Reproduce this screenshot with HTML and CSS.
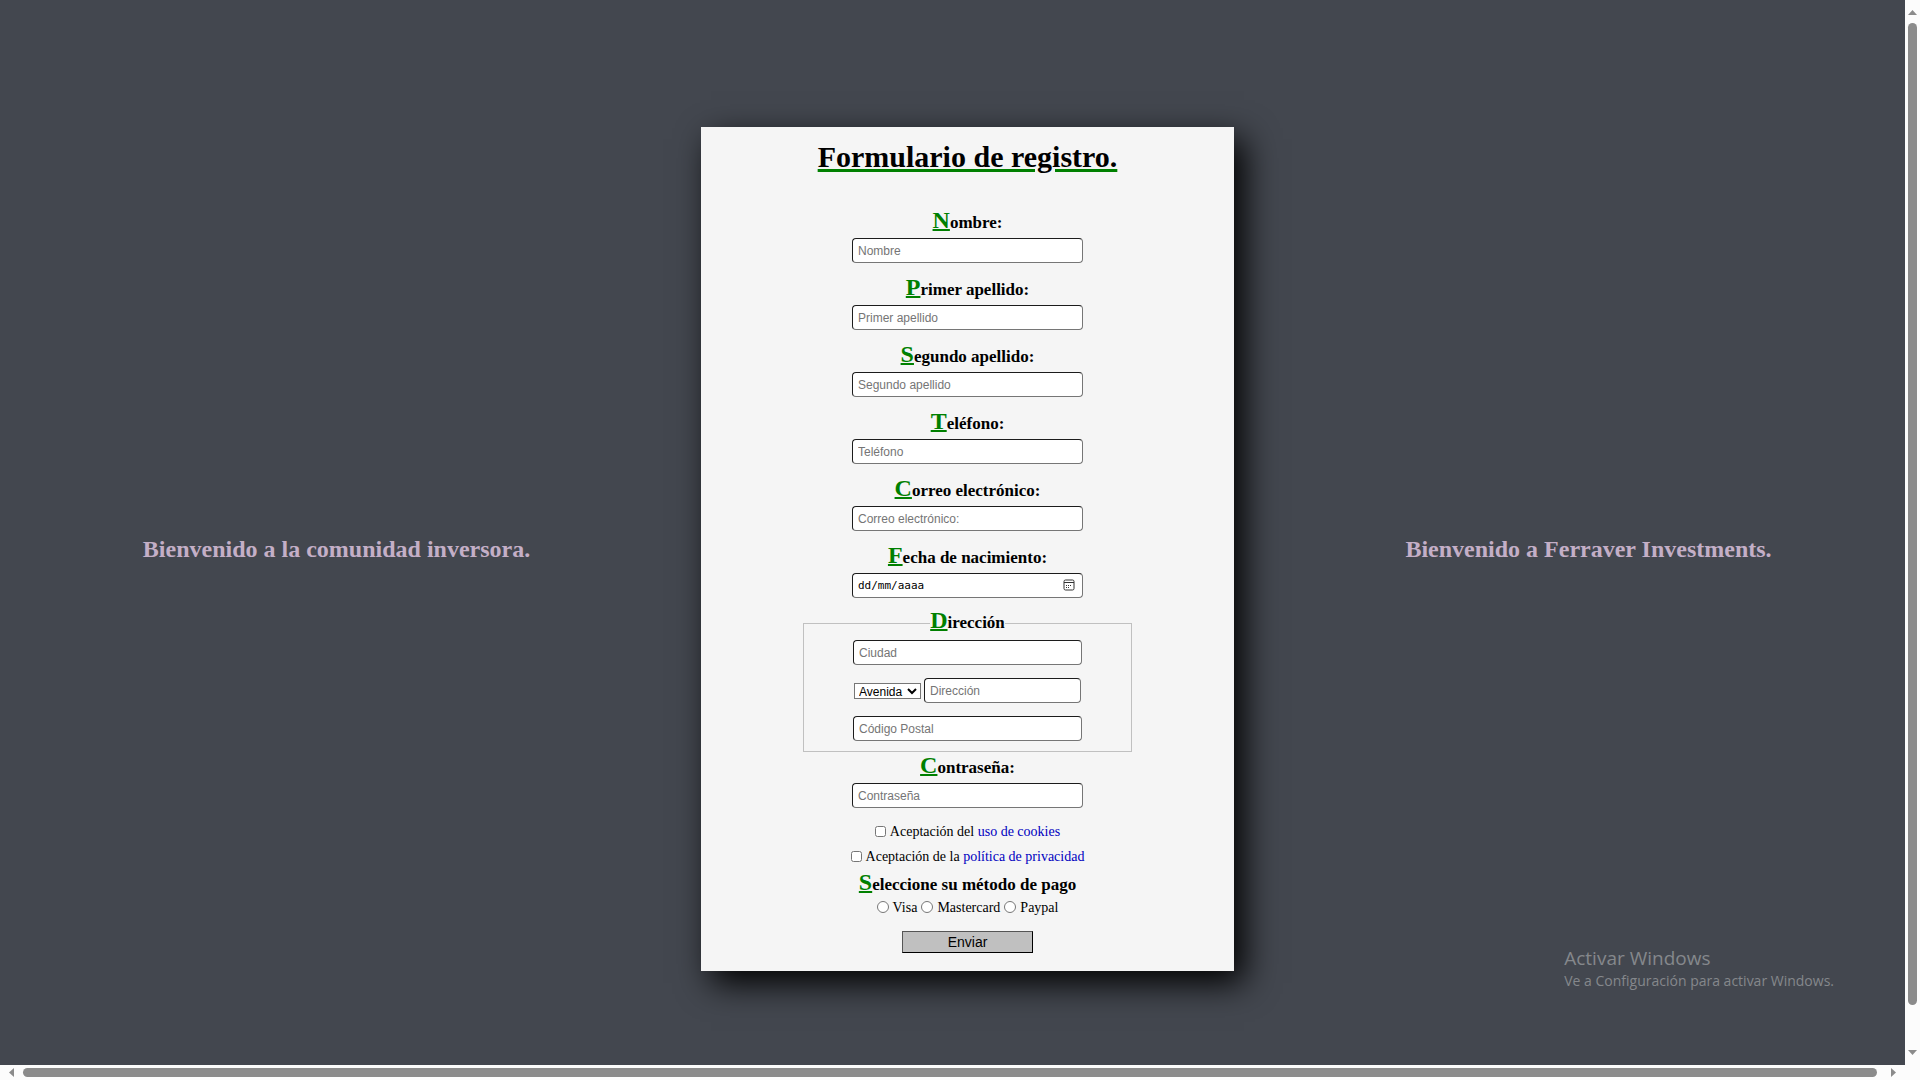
FILE: index.html
```html
<!DOCTYPE html>
<html lang="es">
<head>
<meta charset="utf-8">
<title>Formulario de registro</title>
<link rel="stylesheet" href="styles.css">
</head>
<body>
<div class="window">
  <main class="viewport">
    <div class="page">
      <aside class="side side-left"><h2>Bienvenido a la comunidad inversora.</h2></aside>
      <form class="card">
        <h1>Formulario de registro.</h1>
        <div class="field">
          <label class="title" for="nombre">Nombre:</label>
          <input class="box" id="nombre" type="text" placeholder="Nombre">
        </div>
        <div class="field">
          <label class="title" for="apellido1">Primer apellido:</label>
          <input class="box" id="apellido1" type="text" placeholder="Primer apellido">
        </div>
        <div class="field">
          <label class="title" for="apellido2">Segundo apellido:</label>
          <input class="box" id="apellido2" type="text" placeholder="Segundo apellido">
        </div>
        <div class="field">
          <label class="title" for="telefono">Teléfono:</label>
          <input class="box" id="telefono" type="tel" placeholder="Teléfono">
        </div>
        <div class="field">
          <label class="title" for="correo">Correo electrónico:</label>
          <input class="box" id="correo" type="email" placeholder="Correo electrónico:">
        </div>
        <div class="field">
          <label class="title" for="fecha">Fecha de nacimiento:</label>
          <div class="date">
            <input class="box date-box" id="fecha" type="text" placeholder="dd/mm/aaaa">
            <button class="date-button" type="button" aria-label="Mostrar calendario">
              <svg width="12" height="12" viewBox="0 0 12 12" fill="none" stroke="#333">
                <rect x="1" y="1" width="10" height="10" rx="1.5"/>
                <path d="M1 3.5h10"/>
                <path d="M3 6.5h1m1 0h1m1 0h1M3 8.5h1m1 0h1"/>
              </svg>
            </button>
          </div>
        </div>
        <fieldset class="address">
          <legend class="title">Dirección</legend>
          <input class="box" type="text" placeholder="Ciudad" aria-label="Ciudad">
          <div class="street">
            <select aria-label="Tipo de vía"><option>Avenida</option><option>Calle</option><option>Plaza</option></select>
            <input class="box" type="text" placeholder="Dirección" aria-label="Dirección">
          </div>
          <input class="box" type="text" placeholder="Código Postal" aria-label="Código Postal">
        </fieldset>
        <div class="field">
          <label class="title" for="clave">Contraseña:</label>
          <input class="box" id="clave" type="password" placeholder="Contraseña">
        </div>
        <div class="choices terms">
          <input type="checkbox" id="cookies"><label for="cookies">Aceptación del <a href="#cookies">uso de cookies</a></label>
        </div>
        <div class="choices terms">
          <input type="checkbox" id="privacidad"><label for="privacidad">Aceptación de la <a href="#privacidad">política de privacidad</a></label>
        </div>
        <div class="title">Seleccione su método de pago</div>
        <div class="choices">
          <input type="radio" name="pago" id="visa"><label for="visa">Visa</label>
          <input type="radio" name="pago" id="mastercard"><label for="mastercard">Mastercard</label>
          <input type="radio" name="pago" id="paypal"><label for="paypal">Paypal</label>
        </div>
        <button class="send" type="submit">Enviar</button>
      </form>
      <aside class="side side-right"><h2>Bienvenido a Ferraver Investments.</h2></aside>
    </div>
  </main>
  <div class="bar bar-v" aria-hidden="true">
    <svg width="9" height="5" viewBox="0 0 9 5"><path d="M0 5L4.500 0L9 5z"/></svg>
    <div class="thumb"></div>
    <svg width="9" height="5" viewBox="0 0 9 5"><path d="M0 0h9L4.500 5z"/></svg>
  </div>
  <div class="bar bar-h" aria-hidden="true">
    <svg width="5" height="9" viewBox="0 0 5 9"><path d="M5 0v9L0 4.500z"/></svg>
    <div class="thumb"></div>
    <svg width="5" height="9" viewBox="0 0 5 9"><path d="M0 0v9L5 4.500z"/></svg>
  </div>
  <div class="watermark">
    <p class="watermark-title">Activar Windows</p>
    <p>Ve a Configuración para activar Windows.</p>
  </div>
</div>
</body>
</html>
```
FILE: styles.css
```css
* { box-sizing: border-box; }

body {
  margin: 0;
  font-family: "Liberation Serif", "Times New Roman", serif;
  font-size: 14px;
  color: #000;
}

.window {
  position: relative;
  display: grid;
  grid-template-columns: minmax(0, 1fr) 15px;
  grid-template-rows: minmax(0, 1fr) 15px;
  height: 100vh;
  background: #fcfcfc;
}

.viewport {
  overflow: hidden;
  background: #43474f;
}

/* The page is a little wider than the viewport, as its scrollbar shows. */
.page {
  display: flex;
  align-items: center;
  width: calc(100% + 30px);
  min-height: calc(100% + 33px);
}

.side { flex: 1; text-align: center; }
.side h2 {
  margin: 0;
  font-size: 24px;
  line-height: 28px;
  color: #c4afc7;
}
.side-left h2 { padding-right: 28px; }
.side-right h2 { padding-left: 8px; }

.card {
  display: flex;
  flex-direction: column;
  align-items: center;
  width: 533px;
  padding: 12px 0 18px;
  background: #f5f5f5;
  box-shadow: 10px 12px 32px #000;
}

.card h1 {
  margin: 0 0 33px;
  font-size: 30px;
  line-height: 36px;
  text-decoration: underline green 3px;
}

.field {
  display: flex;
  flex-direction: column;
  align-items: center;
  margin-bottom: 12px;
}

.title {
  display: block;
  padding: 0;
  font-size: 17px;
  font-weight: bold;
  line-height: 30px;
}
.title::first-letter {
  color: green;
  font-size: 24px;
  line-height: 24px;
  text-decoration: underline 2px;
}

.box {
  width: 231px;
  height: 25px;
  padding: 0 5px;
  border: 1px solid #767676;
  border-top-color: #1c1c1c;
  border-left-color: #1c1c1c;
  border-radius: 4px;
  background: #fff;
  font-family: "Liberation Sans", Arial, sans-serif;
  font-size: 12px;
}
.box::placeholder { color: #757575; }

.date { position: relative; }
.date-box { display: block; font-family: "DejaVu Sans Mono", monospace; font-size: 11px; }
.date-box::placeholder { color: #000; }
.date-button {
  position: absolute;
  top: 6px;
  right: 8px;
  width: 12px;
  height: 12px;
  padding: 0;
  border: 0;
  background: none;
}
.date-button svg { display: block; }

.address {
  width: 329px;
  margin: -2px 0 1px;
  padding: 2px 0 10px;
  border: 1px solid #c0c0c0;
}
.address legend { margin: 0 auto; }
.address .box { display: block; width: 229px; margin: 0 auto; }
.street {
  display: flex;
  align-items: center;
  justify-content: center;
  gap: 3px;
  margin: 13px 0;
}
.address .street .box { width: 157px; margin: 0; }
.street select {
  width: 67px;
  height: 16px;
  padding: 0;
  border: 1px solid #767676;
  border-radius: 0;
  background: #fff;
  font-family: "Liberation Sans", Arial, sans-serif;
  font-size: 12px;
}

.choices {
  display: flex;
  align-items: center;
  gap: 4px;
  line-height: 16px;
}
.choices input { width: 11px; height: 11px; margin: 0 0 2px; }
.choices input[type="radio"] { width: 12px; height: 12px; }
.terms { margin: 4px 0 5px; }
.choices a { color: #0000c0; text-decoration: none; }

.send {
  width: 131px;
  height: 22px;
  margin-top: 15px;
  padding: 0;
  border: 1px solid #000;
  border-top-color: #555;
  border-left-color: #555;
  background: #c0c0c0;
  font-family: "Liberation Sans", Arial, sans-serif;
  font-size: 14px;
}

.bar { display: flex; align-items: center; fill: #8b8b8b; }
.bar svg { display: block; flex: none; }
.thumb { background: #8b8b8b; border-radius: 5px; }
.bar-v { flex-direction: column; padding: 10px 0; }
.bar-v .thumb { width: 9px; height: 94%; margin: 8px 0 auto; }
.bar-h { padding: 0 9px; }
.bar-h .thumb { flex: 1; height: 9px; margin: 0 14px 0 9px; }

.watermark {
  position: absolute;
  right: 86px;
  bottom: 89px;
  color: #85888c;
  font-family: "Open Sans", sans-serif;
  font-size: 14px;
  line-height: 20px;
}
.watermark p { margin: 0; }
.watermark .watermark-title { font-size: 19px; line-height: 26px; }
```
